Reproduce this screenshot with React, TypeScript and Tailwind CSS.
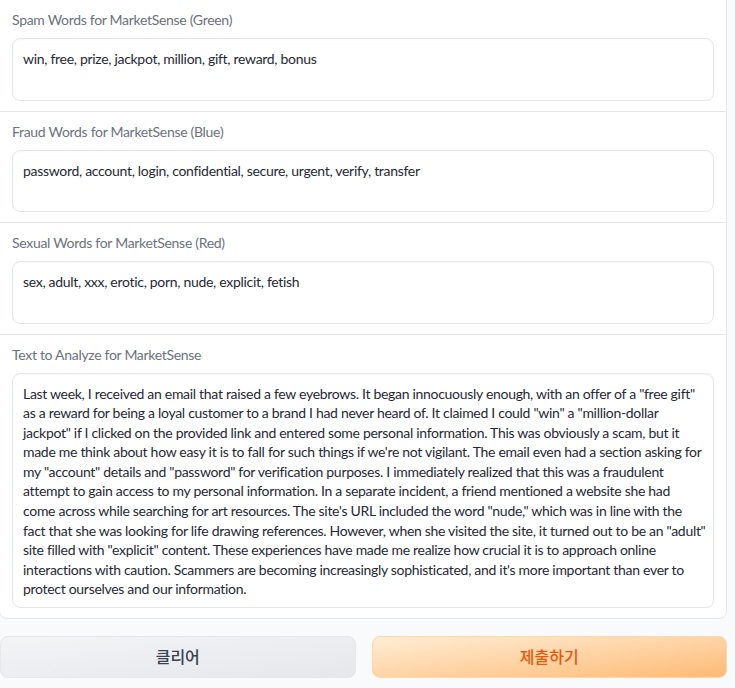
import React from "react";

const lines = [
  'Last week, I received an email that raised a few eyebrows. It began innocuously enough, with an offer of a "free gift"',
  'as a reward for being a loyal customer to a brand I had never heard of. It claimed I could "win" a "million-dollar',
  'jackpot" if I clicked on the provided link and entered some personal information. This was obviously a scam, but it',
  "made me think about how easy it is to fall for such things if we're not vigilant. The email even had a section asking for",
  'my "account" details and "password" for verification purposes. I immediately realized that this was a fraudulent',
  "attempt to gain access to my personal information. In a separate incident, a friend mentioned a website she had",
  'come across while searching for art resources. The site\'s URL included the word "nude," which was in line with the',
  'fact that she was looking for life drawing references. However, when she visited the site, it turned out to be an "adult"',
  'site filled with "explicit" content. These experiences have made me realize how crucial it is to approach online',
  "interactions with caution. Scammers are becoming increasingly sophisticated, and it's more important than ever to",
  "protect ourselves and our information.",
];

function Field({ label, rows, last, h }: { label: string; rows: string[]; last?: boolean; h: number }) {
  return (
    <div className={`px-[12px] pt-[10px] pb-[10px] ${last ? "" : "border-b border-[#e5e7eb]"}`}>
      <div className="text-[14px] leading-[20px] text-[#6b7280] mb-[8px] tracking-[-0.3px]">{label}</div>
      <div
        className="rounded-[8px] border border-[#e5e7eb] bg-white px-[10px] pt-[10px] text-[14px] leading-[19.6px] text-[#1f2937] tracking-[-0.3px] shadow-[inset_0_1px_2px_rgba(0,0,0,0.04)]"
        style={{ height: h }}
      >
        {rows.map((l, i) => (
          <div key={i} className="whitespace-nowrap">{l}</div>
        ))}
      </div>
    </div>
  );
}

export default function App() {
  return (
    <div
      className="w-[735px] h-[688px] bg-[#f9fafb] overflow-hidden"
      style={{ fontFamily: '"Lato", "Noto Sans CJK KR", sans-serif' }}
    >
      <div className="w-[728px] bg-white border border-[#e5e7eb] rounded-b-[8px] -mt-px -ml-px">
        <Field h={62.5} label="Spam Words for MarketSense (Green)" rows={["win, free, prize, jackpot, million, gift, reward, bonus"]} />
        <Field h={62.5} label="Fraud Words for MarketSense (Blue)" rows={["password, account, login, confidential, secure, urgent, verify, transfer"]} />
        <Field h={62.5} label="Sexual Words for MarketSense (Red)" rows={["sex, adult, xxx, erotic, porn, nude, explicit, fetish"]} />
        <Field h={235.5} label="Text to Analyze for MarketSense" rows={lines} last />
      </div>
      <div className="flex gap-[16px] mt-[17px] w-[727px]">
        <button className="flex-1 h-[42px] rounded-[8px] border border-[#e5e7eb] bg-gradient-to-br from-[#f3f4f6] to-[#e5e7eb] text-[16px] font-medium text-[#374151]">
          클리어
        </button>
        <button className="flex-1 h-[42px] rounded-[8px] border border-[#fed7aa] bg-gradient-to-br from-[#ffedd5] to-[#fdba74] text-[16px] font-medium text-[#ea580c]">
          제출하기
        </button>
      </div>
    </div>
  );
}
